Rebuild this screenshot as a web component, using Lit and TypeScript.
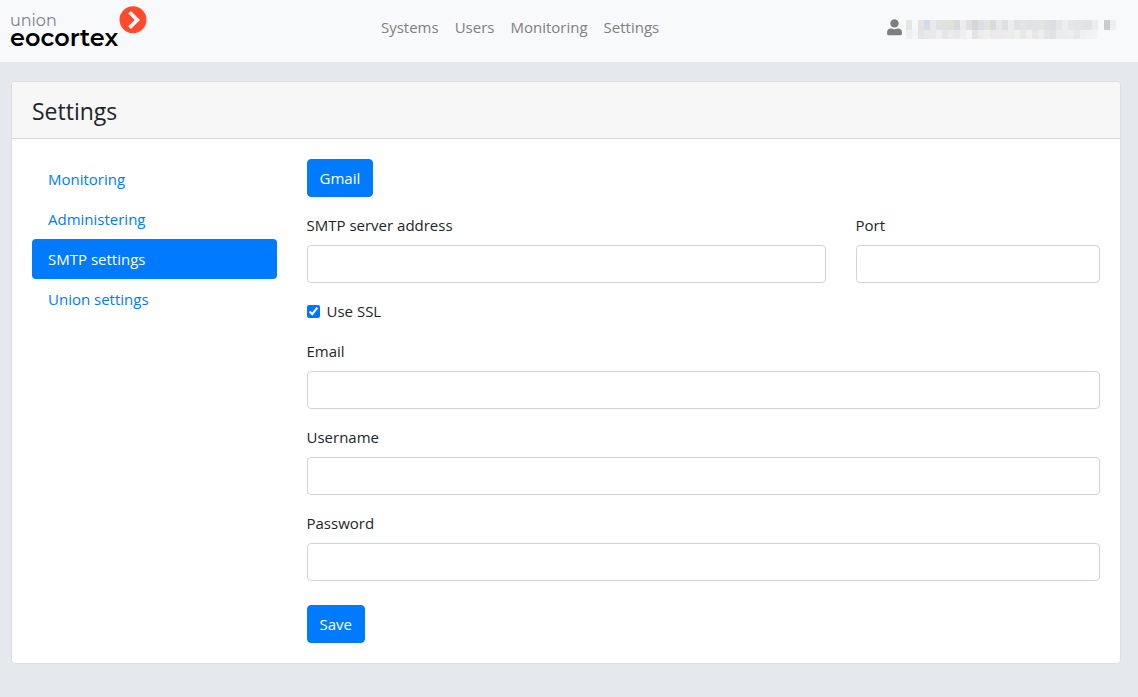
import { LitElement, html, css, svg } from "lit";
import { customElement, state } from "lit/decorators.js";

const SECTIONS = ["Monitoring", "Administering", "SMTP settings", "Union settings"];
const PAGES = ["Systems", "Users", "Monitoring", "Settings"];

// Shades of the masked account name, one entry per 6px block.
const MASK_TOP = [
  "#e5e6e4", "#f6f7f8", "#e4e3e1", "#d5dce7", "#e9eaed", "#e2e2e2", "#e0e1e1", "#e0e0dd",
  "#d9dadd", "#ececee", "#dedfe1", "#d8d6d4", "#d9dfe4", "#e3e4df", "#dadad9", "#e7e8ea",
  "#dfe0e2", "#eaedef", "#e1e2df", "#e3e4e5", "#e1e2e3", "#e3e3e4", "#e3e4e4", "#dfe0e2",
  "#dcdee3", "#e4e6ea", "#ededed", "#e6e6e6", "#e3e4e5", "#e3e4e4", "#e1e2e4", "#eceded",
  "#f8f9fb", "#cccccc", "#efefef",
];
const MASK_BOTTOM = [
  "#eeeff1", "#f3f4f5", "#e4e4e4", "#e8e8ea", "#e8e8eb", "#efeff1", "#e7e5e8", "#ebebed",
  "#e7e7ec", "#eeeef0", "#f4f4f5", "#e3e5e5", "#ebecef", "#f0f0ee", "#eee8e9", "#eaeaec",
  "#ebebed", "#ebecec", "#f0f0ed", "#e7e8e8", "#f0f0f2", "#e8e8e9", "#eeeeec", "#e4e5e8",
  "#e0e1e6", "#ececee", "#ebecec", "#eeeeef", "#e7e8ea", "#eff0f1", "#f1f2f3", "#f2f3f4",
];

@customElement("app-root")
export class AppRoot extends LitElement {
  static styles = css`
    :host {
      display: block;
      box-sizing: border-box;
      min-height: 100vh;
      background: #e5e8ed;
      color: #212529;
      font: 15px/24px "Segoe UI", "Open Sans", "Noto Sans", sans-serif;
    }
    * {
      box-sizing: border-box;
    }
    .topbar {
      display: flex;
      align-items: center;
      justify-content: space-between;
      height: 62px;
      padding: 0 22px 8px 10px;
      background: #f8f9fb;
    }
    .brand {
      display: flex;
      align-items: flex-start;
      gap: 1px;
      padding: 0 6px 2px 0;
      color: #000;
      text-decoration: none;
      font-family: Montserrat, Lato, sans-serif;
    }
    .words {
      display: flex;
      flex-direction: column;
      padding-top: 7px;
    }
    .union {
      color: #7b8190;
      font-size: 16px;
      line-height: 16px;
    }
    .name {
      font-size: 24px;
      line-height: 17px;
      font-weight: 600;
    }
    .pages {
      display: flex;
      gap: 16px;
    }
    .page {
      color: #7f8081;
      text-decoration: none;
    }
    .account {
      display: flex;
      align-items: center;
      gap: 4px;
    }
    .card {
      margin: 19px 17px 0 11px;
      background: #fff;
      border: 1px solid #dcdee1;
      border-radius: 4px;
    }
    .card-head {
      padding: 13px 20px 11px;
      background: #f7f7f7;
      border-bottom: 1px solid #d9d9d9;
      border-radius: 3px 3px 0 0;
    }
    .title {
      margin: 0;
      font-size: 23px;
      line-height: 32px;
      font-weight: 400;
    }
    .card-body {
      display: grid;
      grid-template-columns: repeat(12, minmax(0, 1fr));
      column-gap: 30px;
      padding: 20px;
    }
    .sections {
      grid-column: span 3;
    }
    .section {
      display: block;
      padding: 8px 16px;
      border-radius: 4px;
      color: #007bff;
      text-decoration: none;
    }
    .section.active {
      background: #007bff;
      color: #fff;
    }
    .form {
      grid-column: span 9;
      display: grid;
      grid-template-columns: repeat(12, minmax(0, 1fr));
      gap: 16px 30px;
    }
    .field {
      grid-column: span 12;
      display: flex;
      flex-direction: column;
      gap: 8px;
    }
    .field.server {
      grid-column: span 8;
    }
    .field.port {
      grid-column: span 4;
    }
    .input {
      height: 38px;
      padding: 6px 12px;
      border: 1px solid #ced4da;
      border-radius: 4px;
      background: #fff;
      color: #495057;
      font: inherit;
    }
    .check {
      grid-column: span 12;
      display: flex;
      align-items: center;
      gap: 7px;
    }
    .box {
      width: 13px;
      height: 13px;
      margin: 0;
      accent-color: #0075ff;
    }
    .actions {
      grid-column: span 12;
    }
    .actions.last {
      padding-top: 8px;
    }
    .button {
      display: block;
      height: 38px;
      padding: 6px 12px;
      border: 1px solid #007bff;
      border-radius: 4px;
      background: #007bff;
      color: #fff;
      font: inherit;
      cursor: pointer;
    }
  `;

  @state() private section = "SMTP settings";

  private mask() {
    const row = (shades: string[], y: number, h: number) =>
      shades.map((c, i) => svg`<rect x=${i * 6} y=${y} width="6" height=${h} fill=${c}></rect>`);
    return html`<svg width="210" height="24" viewBox="0 0 210 24" shape-rendering="crispEdges" aria-hidden="true">
      ${row(MASK_TOP, 5, 10)}${row(MASK_BOTTOM, 15, 9)}
    </svg>`;
  }

  private field(id: string, label: string, type = "text", extra = "") {
    return html`<div class="field ${extra}">
      <label for=${id}>${label}</label>
      <input class="input" id=${id} type=${type} />
    </div>`;
  }

  render() {
    return html`
      <header class="topbar">
        <a class="brand" href="#">
          <span class="words"><span class="union">union</span><span class="name">eocortex</span></span>
          <svg width="28" height="28" viewBox="0 0 28 28" aria-hidden="true">
            <circle cx="14" cy="13.8" r="13.5" fill="#ff4a2b"></circle>
            <path d="M10.6 6.2 L18.4 13.9 L10.6 21.6" fill="none" stroke="#fff" stroke-width="3.6"></path>
          </svg>
        </a>
        <nav class="pages">
          ${PAGES.map((p) => html`<a class="page" href="#">${p}</a>`)}
        </nav>
        <div class="account">
          <svg width="15" height="17" viewBox="0 0 15 17" fill="#7f7f7f" aria-hidden="true">
            <circle cx="7.5" cy="4.4" r="4.2"></circle>
            <path d="M4 9.4h.6a6 6 0 0 0 5.8 0H11a3.9 3.9 0 0 1 3.9 3.9v1.5A1.5 1.5 0 0 1 13.4 16.3H1.6A1.5 1.5 0 0 1 .1 14.8v-1.5A3.9 3.9 0 0 1 4 9.4z"></path>
          </svg>
          ${this.mask()}
        </div>
      </header>
      <main class="card">
        <div class="card-head"><h1 class="title">Settings</h1></div>
        <div class="card-body">
          <nav class="sections">
            ${SECTIONS.map(
              (s) => html`<a
                class="section ${s === this.section ? "active" : ""}"
                href="#"
                @click=${(e: Event) => {
                  e.preventDefault();
                  this.section = s;
                }}
                >${s}</a
              >`
            )}
          </nav>
          <form class="form" @submit=${(e: Event) => e.preventDefault()}>
            <div class="actions"><button class="button" type="button">Gmail</button></div>
            ${this.field("server", "SMTP server address", "text", "server")}
            ${this.field("port", "Port", "text", "port")}
            <div class="check">
              <input class="box" id="ssl" type="checkbox" checked />
              <label for="ssl">Use SSL</label>
            </div>
            ${this.field("email", "Email", "email")}
            ${this.field("username", "Username")}
            ${this.field("password", "Password", "password")}
            <div class="actions last"><button class="button" type="submit">Save</button></div>
          </form>
        </div>
      </main>
    `;
  }
}
